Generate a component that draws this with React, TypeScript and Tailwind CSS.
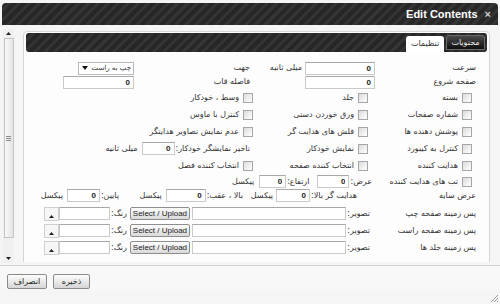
import React from 'react';

const STRIPES =
  'bg-[repeating-linear-gradient(135deg,#272727_0px,#272727_4px,#343434_4px,#343434_7px)]';

const Input = ({ className = '', value = '' }: { className?: string; value?: string }) => (
  <input
    readOnly
    value={value}
    className={`h-[13px] shrink-0 border border-[#cacaca] border-t-[#a8a8a8] bg-white px-[3px] font-['Liberation_Sans',sans-serif] text-[8px] font-bold leading-none text-[#222] outline-none ${className}`}
  />
);

const Check = ({ label }: { label: string }) => (
  <div className="flex items-center gap-[4px] whitespace-nowrap">
    <span className="block h-[10px] w-[10px] shrink-0 border border-[#a6a6a6] bg-[linear-gradient(135deg,#dcdcdc,#ffffff)]" />
    <span>{label}</span>
  </div>
);

const UpTriangle = () => (
  <svg width="5" height="3" viewBox="0 0 5 3">
    <path d="M0 3 L2.5 0 L5 3 Z" fill="#222" />
  </svg>
);

const BgRow = ({ label }: { label: string }) => (
  <div className="flex h-[17px] items-center">
    <div className="w-[106px] whitespace-nowrap">{label}</div>
    <div className="flex w-[326px] items-center">
      <div className="whitespace-nowrap pl-[1px]">تصویر:</div>
      <Input className="min-w-0 flex-1" />
      <button
        dir="ltr"
        className="mr-[2px] h-[13px] w-[60px] shrink-0 rounded-[2px] border border-[#8e8e8e] bg-[linear-gradient(#fdfdfd,#d9d9d9)] font-['Liberation_Sans',sans-serif] text-[8px] leading-none text-[#222]"
      >
        Select / Upload
      </button>
      <div className="whitespace-nowrap pl-[1px] pr-[3px]">رنگ:</div>
      <Input className="w-[51px]" />
      <div className="flex h-[14px] w-[15px] shrink-0 items-end justify-center border border-[#cfcfcf] bg-[#f6f6f6] pb-[2px]">
        <UpTriangle />
      </div>
    </div>
  </div>
);

const App = () => {
  return (
    <div className="relative h-[304px] w-[500px] overflow-hidden bg-[#f5f5f5] font-['DejaVu_Sans',sans-serif] text-[8px] text-[#333]">
      {/* title bar */}
      <div className="px-[2px] pt-[3px]">
        <div className={`flex h-[22px] items-center justify-end gap-[7px] rounded-t-[4px] pr-[7px] ${STRIPES}`}>
          <span className="font-['Liberation_Sans',sans-serif] text-[11px] font-bold text-white">
            Edit Contents
          </span>
          <span className="font-['Liberation_Sans',sans-serif] text-[11px] font-bold leading-none text-[#d0d0d0]">
            ×
          </span>
        </div>
      </div>

      {/* body */}
      <div className="flex h-[240px] pt-[4px]">
        {/* scrollbar */}
        <div className="ml-[3px] flex h-[234px] w-[11px] shrink-0 flex-col items-center bg-[#f0f0f0]">
          <div className="flex h-[9px] items-center">
            <UpTriangle />
          </div>
          <div className="flex h-[200px] w-[10px] items-center justify-center border border-[#c4c4c4] bg-[linear-gradient(90deg,#f8f8f8,#e4e4e4)]">
            <div className="flex flex-col gap-[1px]">
              <span className="block h-px w-[5px] bg-[#888]" />
              <span className="block h-px w-[5px] bg-[#888]" />
              <span className="block h-px w-[5px] bg-[#888]" />
            </div>
          </div>
          <div className="flex-1" />
          <div className="flex h-[10px] items-center">
            <svg width="5" height="3" viewBox="0 0 5 3">
              <path d="M0 0 L2.5 3 L5 0 Z" fill="#222" />
            </svg>
          </div>
        </div>

        {/* scroll area */}
        <div className="ml-[9px] h-[233px] w-[467px] shrink-0 overflow-hidden pt-[2px]">
          <div className="h-[300px] rounded-[4px] border border-[#d6d6d6] bg-[#fdfdfd] px-[2px] pt-[1px]">
            {/* tabs */}
            <div className={`flex h-[19px] items-end justify-end gap-[2px] rounded-[3px] pr-[2px] ${STRIPES}`}>
              <div className="flex h-[16px] w-[38px] items-center justify-center rounded-t-[3px] bg-white text-[#333]">
                تنظیمات
              </div>
              <div className="mb-[2px] flex h-[15px] w-[39px] items-center justify-center rounded-t-[3px] border border-[#6a6a6a] bg-[linear-gradient(#4a4a4a,#0e0e0e)] text-[#eee]">
                محتویات
              </div>
            </div>

            {/* form */}
            <div dir="rtl" className="mt-[9px] pr-[11px]">
              <div className="flex h-[14px] items-center">
                <div className="w-[101px] whitespace-nowrap">سرعت</div>
                <Input className="w-[70px]" value="0" />
                <div className="w-[55px] whitespace-nowrap pr-[3px]">میلی ثانیه</div>
                <div className="w-[116px] whitespace-nowrap">جهت</div>
                <div className="flex h-[13px] w-[56px] shrink-0 items-center justify-between border border-[#b9b9b9] bg-white pl-[3px] pr-[2px]">
                  <span className="whitespace-nowrap text-[7px]">چپ به راست</span>
                  <svg width="6" height="4" viewBox="0 0 6 4">
                    <path d="M0 0 L3 4 L6 0 Z" fill="#111" />
                  </svg>
                </div>
              </div>

              <div className="flex h-[14px] items-center">
                <div className="w-[101px] whitespace-nowrap">صفحه شروع</div>
                <Input className="w-[70px]" value="0" />
                <div className="w-[55px]" />
                <div className="w-[116px] whitespace-nowrap">فاصله قاب</div>
                <Input className="w-[71px]" value="0" />
              </div>

              <div className="flex h-[17px] items-center pr-[4px]">
                <div className="w-[104px]"><Check label="بسته" /></div>
                <div className="w-[115px]"><Check label="جلد" /></div>
                <Check label="وسط ، خودکار" />
              </div>
              <div className="flex h-[17px] items-center pr-[4px]">
                <div className="w-[104px]"><Check label="شماره صفحات" /></div>
                <div className="w-[115px]"><Check label="ورق خوردن دستی" /></div>
                <Check label="کنترل با ماوس" />
              </div>
              <div className="flex h-[17px] items-center pr-[4px]">
                <div className="w-[104px]"><Check label="پوشش دهنده ها" /></div>
                <div className="w-[115px]"><Check label="فلش های هدایت گر" /></div>
                <Check label="عدم نمایش تصاویر هدایتگر" />
              </div>
              <div className="flex h-[17px] items-center pr-[4px]">
                <div className="w-[104px]"><Check label="کنترل به کیبورد" /></div>
                <div className="w-[115px]"><Check label="نمایش خودکار" /></div>
                <div className="whitespace-nowrap pl-[1px] pr-[3px]">تاخیر نمایشگر خودکار:</div>
                <Input className="w-[33px]" value="0" />
                <div className="whitespace-nowrap pr-[4px]">میلی ثانیه</div>
              </div>
              <div className="flex h-[17px] items-center pr-[4px]">
                <div className="w-[104px]"><Check label="هدایت کننده" /></div>
                <div className="w-[115px]"><Check label="انتخاب کننده صفحه" /></div>
                <Check label="انتخاب کننده فصل" />
              </div>

              <div className="flex h-[15px] items-center pr-[4px]">
                <div className="w-[100px]"><Check label="تب های هدایت کننده" /></div>
                <div className="whitespace-nowrap pl-[1px]">عرض:</div>
                <Input className="w-[32px]" value="0" />
                <div className="whitespace-nowrap pl-[1px] pr-[8px]">ارتفاع:</div>
                <Input className="w-[27px]" value="0" />
                <div className="whitespace-nowrap pr-[5px]">پیکسل</div>
              </div>

              <div className="flex h-[13px] items-center">
                <div className="w-[119px] whitespace-nowrap">عرض سایه</div>
                <div className="flex w-[114px] items-center">
                  <div className="whitespace-nowrap pl-[1px]">هدایت گر بالا:</div>
                  <Input className="w-[34px]" value="0" />
                  <div className="whitespace-nowrap pr-[3px]">پیکسل</div>
                </div>
                <div className="flex w-[124px] items-center">
                  <div className="whitespace-nowrap pl-[1px]">بالا ، عقب:</div>
                  <Input className="w-[40px]" value="0" />
                  <div className="whitespace-nowrap pr-[4px]">پیکسل</div>
                </div>
                <div className="flex items-center">
                  <div className="whitespace-nowrap pl-[1px]">پایین:</div>
                  <Input className="w-[33px]" value="0" />
                  <div className="whitespace-nowrap pr-[4px]">پیکسل</div>
                </div>
              </div>

              <div className="mt-[3px]">
                <BgRow label="پس زمینه صفحه چپ" />
                <BgRow label="پس زمینه صفحه راست" />
                <BgRow label="پس زمینه جلد ها" />
              </div>
            </div>
          </div>
        </div>
      </div>

      {/* footer */}
      <div className="border-t border-[#d0d0d0] bg-[#f8f8f8] pl-[7px] pt-[8px]">
        <div className="flex gap-[6px]">
          <button className="h-[15px] w-[40px] rounded-[2px] border border-[#8a8a8a] bg-[linear-gradient(#fdfdfd,#d6d6d6)] text-[8px] leading-none text-[#222]">
            انصراف
          </button>
          <button className="h-[15px] w-[37px] rounded-[2px] border border-[#8a8a8a] bg-[linear-gradient(#fdfdfd,#d6d6d6)] text-[8px] leading-none text-[#222]">
            ذخیره
          </button>
        </div>
      </div>

      <svg className="absolute bottom-[2px] right-[2px]" width="8" height="8" viewBox="0 0 8 8">
        <path d="M8 1 L1 8 M8 4 L4 8 M8 7 L7 8" stroke="#999" strokeWidth="1" />
      </svg>
    </div>
  );
};

export default App;
